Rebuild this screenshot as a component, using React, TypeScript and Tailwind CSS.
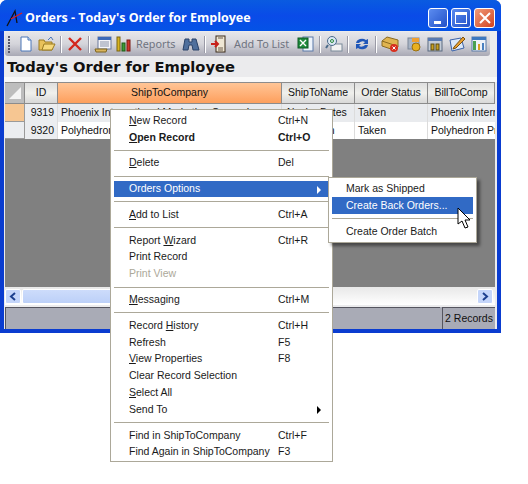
import React from 'react';

const uiFont = "font-['Liberation_Sans',sans-serif]";
const barFont = "font-['Noto_Sans',sans-serif]";

type MenuRow = {
  label?: React.ReactNode;
  keys?: string;
  bold?: boolean;
  disabled?: boolean;
  active?: boolean;
  arrow?: boolean;
  sep?: boolean;
};

const mainMenu: MenuRow[] = [
  { label: <><u>N</u>ew Record</>, keys: 'Ctrl+N' },
  { label: <><u>O</u>pen Record</>, keys: 'Ctrl+O', bold: true },
  { sep: true },
  { label: <><u>D</u>elete</>, keys: 'Del' },
  { sep: true },
  { label: 'Orders Options', active: true, arrow: true },
  { sep: true },
  { label: <><u>A</u>dd to List</>, keys: 'Ctrl+A' },
  { sep: true },
  { label: <>Report <u>W</u>izard</>, keys: 'Ctrl+R' },
  { label: 'Print Record' },
  { label: 'Print View', disabled: true },
  { sep: true },
  { label: <><u>M</u>essaging</>, keys: 'Ctrl+M' },
  { sep: true },
  { label: <>Record <u>H</u>istory</>, keys: 'Ctrl+H' },
  { label: 'Refresh', keys: 'F5' },
  { label: <><u>V</u>iew Properties</>, keys: 'F8' },
  { label: 'Clear Record Selection' },
  { label: <><u>S</u>elect All</> },
  { label: 'Send To', arrow: true },
  { sep: true },
  { label: 'Find in ShipToCompany', keys: 'Ctrl+F' },
  { label: 'Find Again in ShipToCompany', keys: 'F3' },
];

const subMenu: MenuRow[] = [
  { label: 'Mark as Shipped' },
  { label: 'Create Back Orders...', active: true },
  { sep: true },
  { label: 'Create Order Batch' },
];

const Sep = () => <div className="w-[2px] h-[17px] mx-[4px] bg-[#9a9aa6] border-r border-white shrink-0" />;

const Icon = ({ children }: { children: React.ReactNode }) => (
  <svg width="18" height="18" viewBox="0 0 18 18" className="shrink-0">
    {children}
  </svg>
);

const Toolbar = () => (
  <div className={`flex items-center h-[24px] w-[485px] ml-[1px] pl-[3px] rounded-[3px] bg-gradient-to-b from-[#e6e6ea] via-[#d4d4da] to-[#a9a9b5] text-[10.8px] text-[#6f7480] whitespace-nowrap ${barFont}`}>
    <div className="flex flex-col gap-[1px] w-[3px] mr-[6px] shrink-0">
      {[0, 1, 2, 3, 4, 5].map((i) => (
        <div key={i} className="w-[2px] h-[2px] bg-[#55556a]" />
      ))}
    </div>
    <Icon>
      <path d="M4 2h7l3 3v11H4z" fill="#fff" stroke="#4a76b8" />
      <path d="M11 2v3h3" fill="#cfe0f5" stroke="#4a76b8" />
    </Icon>
    <div className="w-[3px] shrink-0" />
    <Icon>
      <path d="M1 15V5h5l1 2h7v8z" fill="#e8c15a" stroke="#9a7a20" />
      <path d="M4 15l2-6h11l-3 6z" fill="#f6d97c" stroke="#9a7a20" />
      <path d="M10 5l3-3 2 3" fill="none" stroke="#4a76b8" />
    </Icon>
    <Sep />
    <Icon>
      <path d="M3 3l12 12M15 3L3 15" stroke="#d3271c" strokeWidth="2.4" />
    </Icon>
    <Sep />
    <Icon>
      <rect x="4" y="2" width="13" height="12" fill="#f4f4f8" stroke="#6c7a9c" />
      <rect x="4" y="2" width="13" height="3" fill="#3c69b8" />
      <path d="M6 7h9M6 9h9M6 11h9" stroke="#8a93a8" />
      <path d="M1 14h12l-1 3H2z" fill="#d9b45c" stroke="#7d6420" />
    </Icon>
    <div className="w-[3px] shrink-0" />
    <Icon>
      <rect x="2" y="2" width="3" height="14" fill="#d8b320" stroke="#7a6410" />
      <rect x="7" y="8" width="3" height="8" fill="#3c9a34" stroke="#1e5a18" />
      <rect x="12" y="5" width="3" height="11" fill="#d0342a" stroke="#7a1a14" />
    </Icon>
    <span className="ml-[3px] w-[38px] shrink-0">Reports</span>
    <div className="w-[8px] shrink-0" />
    <Icon>
      <path d="M3 4h4v3h3V4h4l3 11h-6l-1-5H7l-1 5H1z" fill="#4f6f9c" stroke="#2a4268" />
    </Icon>
    <Sep />
    <Icon>
      <rect x="6" y="1" width="9" height="16" fill="#efe7d4" stroke="#3a2a1a" />
      <path d="M8 3h5M8 13h5M8 15h5" stroke="#6a5a4a" />
      <path d="M1 9h7M5 6l3 3-3 3" stroke="#c8201a" strokeWidth="2" fill="none" />
    </Icon>
    <span className="ml-[6px] w-[54px] shrink-0">Add To List</span>
    <div className="w-[9px] shrink-0" />
    <Icon>
      <rect x="6" y="2" width="10" height="14" fill="#eef3fb" stroke="#5a78a8" />
      <rect x="1" y="3" width="10" height="10" fill="#1f8a3c" stroke="#0e5a24" />
      <path d="M3 5l6 6M9 5l-6 6" stroke="#fff" strokeWidth="1.4" />
    </Icon>
    <Sep />
    <Icon>
      <rect x="6" y="9" width="11" height="7" fill="#f2f2f2" stroke="#7a8a9a" />
      <circle cx="7" cy="6" r="4.5" fill="#dbe8f4" stroke="#4a6a8a" />
      <path d="M3 10l-2 3" stroke="#4a6a8a" strokeWidth="2" />
      <circle cx="7" cy="6" r="1.5" fill="none" stroke="#2a8a3a" />
    </Icon>
    <Sep />
    <Icon>
      <path d="M3 8a6 5 0 0 1 10-3l2-1v5h-5l2-2a4 3 0 0 0-6 1z" fill="#1f56b8" />
      <path d="M15 10a6 5 0 0 1-10 3l-2 1V9h5l-2 2a4 3 0 0 0 6-1z" fill="#1f56b8" />
    </Icon>
    <Sep />
    <Icon>
      <path d="M1 6l5-4 11 3v7l-4 3-12-4z" fill="#e0b450" stroke="#8a6a20" />
      <path d="M1 6l12 4v5" fill="none" stroke="#8a6a20" />
      <circle cx="13" cy="13" r="4" fill="#d8301f" />
      <path d="M11.5 11.5l3 3M14.5 11.5l-3 3" stroke="#fff" />
    </Icon>
    <div className="w-[6px] shrink-0" />
    <Icon>
      <rect x="3" y="3" width="11" height="11" fill="#a8b4c4" stroke="#7a8698" />
      <path d="M7 3h7v4H7z" fill="#f0a030" />
      <circle cx="11" cy="12" r="4" fill="#e8b020" stroke="#9a7010" />
    </Icon>
    <div className="w-[3px] shrink-0" />
    <Icon>
      <rect x="2" y="3" width="14" height="13" fill="#c4ccd8" stroke="#5a6a80" />
      <rect x="2" y="3" width="14" height="3" fill="#5a7ab0" />
      <rect x="5" y="9" width="3" height="6" fill="#c8a020" stroke="#5a4a10" />
      <rect x="10" y="9" width="3" height="6" fill="#c8a020" stroke="#5a4a10" />
    </Icon>
    <div className="w-[4px] shrink-0" />
    <Icon>
      <path d="M2 5l11-2 3 10-12 3z" fill="#dbe8f8" stroke="#3a62a8" />
      <path d="M6 12l9-10 2 2-9 9-3 1z" fill="#e8a030" stroke="#7a5010" />
    </Icon>
    <div className="w-[4px] shrink-0" />
    <Icon>
      <rect x="2" y="2" width="14" height="14" fill="#eef2f8" stroke="#5a7aa8" />
      <rect x="2" y="2" width="14" height="3" fill="#3c78c0" />
      <rect x="3" y="6" width="3" height="9" fill="#4aa050" />
      <rect x="8" y="9" width="2" height="6" fill="#d8a020" />
      <rect x="12" y="8" width="2" height="7" fill="#4a80c0" />
    </Icon>
  </div>
);

const HeaderCell = ({ w, tone, children }: { w: string; tone?: 'active' | 'corner'; children?: React.ReactNode }) => (
  <div
    className={`${w} shrink-0 h-full flex items-center justify-center border-r border-b border-[#8c8c8c] whitespace-nowrap overflow-hidden ${
      tone === 'active'
        ? 'bg-gradient-to-b from-[#ffc596] to-[#fd9f5c]'
        : tone === 'corner'
          ? 'bg-[#bdbdbd]'
          : 'bg-gradient-to-b from-[#dedede] via-[#f0f0ec] to-[#d8d8d8]'
    }`}
  >
    {children}
  </div>
);

const DataRow = ({ current, id, company, name, bill }: { current?: boolean; id: string; company: string; name: string; bill: string }) => (
  <div className={`flex h-[17.5px] items-center ${current ? 'bg-[#e9ebee]' : 'bg-white'}`}>
    <div className={`w-[20px] h-full shrink-0 border-r border-b border-[#9a9a9a] ${current ? 'bg-[#f6c692]' : 'bg-[#ebedf0]'}`} />
    <div className="w-[33px] pr-[3px] text-right shrink-0 border-r border-[#dcdcdc] h-full leading-[17px] bg-[#ebedf0]">{id}</div>
    <div className="w-[224px] pl-[3px] shrink-0 border-r border-[#dcdcdc] h-full leading-[17px] overflow-hidden whitespace-nowrap">{company}</div>
    <div className="w-[73px] pl-[3px] shrink-0 border-r border-[#dcdcdc] h-full leading-[17px] overflow-hidden whitespace-nowrap">{name}</div>
    <div className="w-[73px] pl-[3px] shrink-0 border-r border-[#dcdcdc] h-full leading-[17px]">Taken</div>
    <div className="flex-1 pl-[3px] h-full leading-[17px] overflow-hidden whitespace-nowrap">{bill}</div>
  </div>
);

const MenuList = ({ rows, wide }: { rows: MenuRow[]; wide?: boolean }) => (
  <div className="flex flex-col">
    {rows.map((row, i) =>
      row.sep ? (
        <div key={i} className="h-[9px] flex items-center px-[3px]">
          <div className="w-full h-[1px] bg-[#aca899]" />
        </div>
      ) : (
        <div
          key={i}
          className={`relative flex items-center h-[16.8px] mx-[3px] ${wide ? 'pl-[15px]' : 'pl-[14px]'} ${
            row.active ? 'bg-[#316ac5] text-white' : row.disabled ? 'text-[#aca899]' : 'text-[#1a1a1a]'
          } ${row.bold ? 'font-bold' : ''}`}
        >
          <span className={wide ? 'w-[149px] shrink-0 whitespace-nowrap' : 'whitespace-nowrap'}>{row.label}</span>
          {row.keys && <span className="whitespace-nowrap">{row.keys}</span>}
          {row.arrow && (
            <svg width="5" height="8" viewBox="0 0 5 8" className="absolute right-[7px] top-[5px]">
              <path d="M0 0l4 4-4 4z" fill={row.active ? '#fff' : '#000'} />
            </svg>
          )}
        </div>
      ),
    )}
  </div>
);

const App: React.FC = () => {
  return (
    <div className={`relative w-[528px] h-[484px] bg-white overflow-hidden text-[10.5px] text-[#111] ${uiFont}`}>
      <div className="flex flex-col w-[501px] h-[333px] rounded-t-[7px] bg-[#0a3cd0] px-[4px] pb-[4px]">
        {/* title bar */}
        <div className="flex items-center h-[31px] -mx-[4px] px-[5px] pt-[4px] rounded-t-[7px] bg-gradient-to-b from-[#0a5be0] via-[#0a4be8] to-[#0453e6] shrink-0">
          <svg width="18" height="18" viewBox="0 0 18 18" className="shrink-0">
            <path d="M2 17L10 2l2 12" fill="none" stroke="#111" strokeWidth="1.3" />
            <path d="M6 10L17 4" fill="none" stroke="#e0201c" strokeWidth="1.3" />
          </svg>
          <span className="ml-[2px] mt-[1px] text-white font-bold text-[12.5px] font-['Open_Sans',sans-serif] whitespace-nowrap">Orders - Today's Order for Employee</span>
          <div className="ml-auto flex gap-[3px] mr-[1px]">
            <div className="relative w-[20px] h-[20px] rounded-[3px] border border-white bg-gradient-to-br from-[#5c8cf0] to-[#2350c8]">
              <div className="absolute left-[5px] bottom-[3px] w-[7px] h-[3px] bg-white" />
            </div>
            <div className="w-[20px] h-[20px] rounded-[3px] border border-white bg-gradient-to-br from-[#5c8cf0] to-[#2350c8] flex items-center justify-center">
              <div className="w-[12px] h-[12px] border border-white border-t-[3px]" />
            </div>
            <div className="w-[21px] h-[20px] rounded-[3px] border border-white bg-gradient-to-br from-[#ef9a78] to-[#d0401c] flex items-center justify-center">
              <svg width="12" height="12" viewBox="0 0 12 12">
                <path d="M1 1l10 10M11 1L1 11" stroke="#fff" strokeWidth="2" />
              </svg>
            </div>
          </div>
        </div>

        {/* client area */}
        <div className="flex flex-col flex-1 min-h-0 bg-[#ebebed]">
          <div className="pt-[1px]">
            <Toolbar />
          </div>
          <div className="h-[21px] pl-[3px] text-[14.7px] leading-[21px] font-bold text-[#111] font-['DejaVu_Sans',sans-serif] whitespace-nowrap">
            Today's Order for Employee
          </div>
          <div className="h-[5px] bg-[#f8f8f8]" />

          {/* grid */}
          <div className="flex flex-col flex-1 min-h-0 ml-[1px] mr-[2px] border-t border-[#8c8c8c]">
            <div className="flex h-[21px] shrink-0">
              <HeaderCell w="w-[20px]" tone="corner">
                <svg width="14" height="14" viewBox="0 0 14 14">
                  <path d="M13 1v12H1z" fill="#f4f4f4" />
                </svg>
              </HeaderCell>
              <HeaderCell w="w-[33px]">ID</HeaderCell>
              <HeaderCell w="w-[224px]" tone="active">ShipToCompany</HeaderCell>
              <HeaderCell w="w-[73px]">ShipToName</HeaderCell>
              <HeaderCell w="w-[73px]">Order Status</HeaderCell>
              <HeaderCell w="flex-1">BillToComp</HeaderCell>
            </div>
            <DataRow current id="9319" company="Phoenix International Marketing Group, Inc." name="Alesha Bates" bill="Phoenix International" />
            <DataRow id="9320" company="Polyhedron Products" name="Jim Hinton" bill="Polyhedron Products" />
            <div className="flex-1 bg-[#808080]" />
            <div className="flex items-center h-[18px] shrink-0 bg-gradient-to-b from-[#e8e8e8] to-white gap-[1px]">
              <div className="w-[16px] h-[15px] rounded-[2px] bg-[#c4d5fa] border border-white flex items-center justify-center">
                <svg width="8" height="9" viewBox="0 0 8 9">
                  <path d="M6 1L2 4.5 6 8" fill="none" stroke="#1c3f8f" strokeWidth="2" />
                </svg>
              </div>
              <div className="w-[130px] h-[15px] rounded-[2px] bg-gradient-to-b from-[#cddcfb] to-[#bcd0f8] border border-white" />
              <div className="flex-1" />
              <div className="w-[16px] h-[15px] mr-[2px] rounded-[2px] bg-[#c4d5fa] border border-white flex items-center justify-center">
                <svg width="8" height="9" viewBox="0 0 8 9">
                  <path d="M2 1l4 3.5L2 8" fill="none" stroke="#1c3f8f" strokeWidth="2" />
                </svg>
              </div>
            </div>
          </div>
          <div className="h-[2px] bg-[#ebebed] shrink-0" />

          {/* status bar */}
          <div className="flex h-[22px] shrink-0 ml-[1px] mr-[2px] gap-[2px] bg-[#a9abb6]">
            <div className="flex-1 border-t border-l border-[#55555f]" />
            <div className="w-[53px] border-t border-l border-[#55555f] flex items-center justify-center whitespace-nowrap">2 Records</div>
          </div>
        </div>
      </div>

      {/* context menu */}
      <div className="absolute left-[110px] top-[109px] w-[223px] h-[353px] pt-[2.2px] bg-white border border-[#aca899]">
        <MenuList rows={mainMenu} wide />
      </div>

      {/* Orders Options submenu */}
      <div className="absolute left-[328px] top-[177px] w-[149px] h-[66px] pt-[2.6px] bg-white border border-[#aca899] shadow-[3px_3px_3px_rgba(0,0,0,0.45)]">
        <MenuList rows={subMenu} />
      </div>

      {/* mouse pointer */}
      <svg width="14" height="22" viewBox="0 0 14 22" className="absolute left-[457px] top-[207px]">
        <path d="M1 1v16l4-3 3 7 3-1-3-7h5z" fill="#fff" stroke="#000" strokeWidth="1" />
      </svg>
    </div>
  );
};

export default App;
